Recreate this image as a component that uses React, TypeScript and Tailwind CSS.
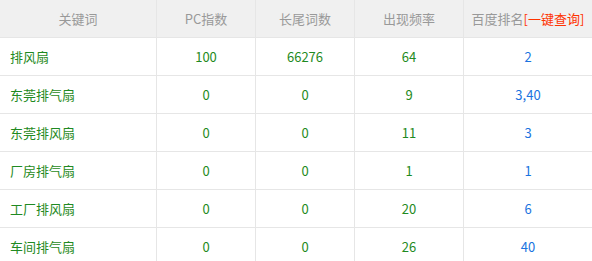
import React from 'react';

const rows = [
  { kw: '排风扇', pc: '100', tail: '66276', freq: '64', rank: '2' },
  { kw: '东莞排气扇', pc: '0', tail: '0', freq: '9', rank: '3,40' },
  { kw: '东莞排风扇', pc: '0', tail: '0', freq: '11', rank: '3' },
  { kw: '厂房排气扇', pc: '0', tail: '0', freq: '1', rank: '1' },
  { kw: '工厂排风扇', pc: '0', tail: '0', freq: '20', rank: '6' },
  { kw: '车间排气扇', pc: '0', tail: '0', freq: '26', rank: '40' },
];

const cols = 'grid grid-cols-[157px_99px_99px_109px_128px]';
const cell = 'h-[38px] flex items-center justify-center border-b border-r border-[#e6e6e6]';

export default function App() {
  return (
    <div
      className="w-[592px] h-[261px] overflow-hidden bg-white text-[13px]"
      style={{ fontFamily: '"Microsoft YaHei", "Noto Sans CJK SC", sans-serif' }}
    >
      <div className={`${cols} bg-[#f0f0f0] text-[#999999]`}>
        <div className={cell}>关键词</div>
        <div className={cell}>PC指数</div>
        <div className={cell}>长尾词数</div>
        <div className={cell}>出现频率</div>
        <div className={`${cell} border-r-0`}>
          百度排名<span className="text-[#ff3300]">[一键查询]</span>
        </div>
      </div>
      {rows.map((r) => (
        <div key={r.kw} className={`${cols} text-[#1f8a22]`}>
          <div className={`${cell} justify-start pl-[10px]`}>{r.kw}</div>
          <div className={cell}>{r.pc}</div>
          <div className={cell}>{r.tail}</div>
          <div className={cell}>{r.freq}</div>
          <div className={`${cell} border-r-0 text-[#1a73e0]`}>{r.rank}</div>
        </div>
      ))}
    </div>
  );
}
